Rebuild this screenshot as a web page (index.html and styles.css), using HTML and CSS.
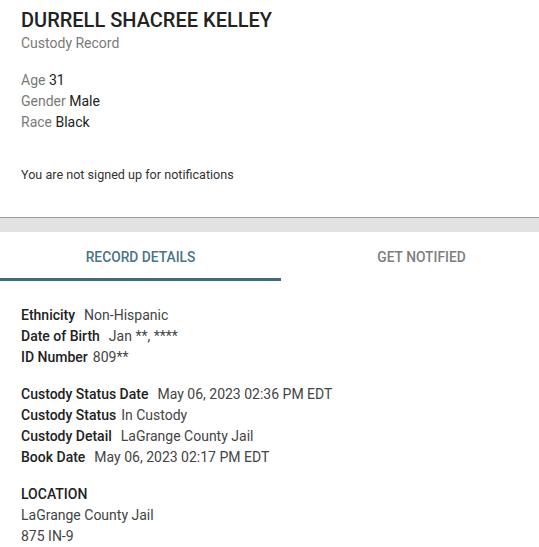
FILE: index.html
```html
<!DOCTYPE html>
<html lang="en">
<head>
  <meta charset="UTF-8">
  <title>Custody Record</title>
  <link rel="stylesheet" href="styles.css">
</head>
<body>
  <div class="header">
    <h1>DURRELL SHACREE KELLEY</h1>
    <p class="subtitle">Custody Record</p>

    <div class="facts">
      <div><span class="muted">Age</span> 31</div>
      <div><span class="muted">Gender</span> Male</div>
      <div><span class="muted">Race</span> Black</div>
    </div>

    <p class="notice">You are not signed up for notifications</p>
  </div>

  <div class="divider"></div>

  <div class="tabs">
    <div class="tab active">RECORD DETAILS</div>
    <div class="tab">GET NOTIFIED</div>
  </div>

  <div class="details">
    <div class="group">
      <div><span class="label">Ethnicity</span><span class="value">Non-Hispanic</span></div>
      <div><span class="label">Date of Birth</span><span class="value">Jan **, ****</span></div>
      <div><span class="label short">ID Number</span><span class="value">809**</span></div>
    </div>

    <div class="group">
      <div><span class="label">Custody Status Date</span><span class="value">May 06, 2023 02:36 PM EDT</span></div>
      <div><span class="label short">Custody Status</span><span class="value">In Custody</span></div>
      <div><span class="label">Custody Detail</span><span class="value">LaGrange County Jail</span></div>
      <div><span class="label">Book Date</span><span class="value">May 06, 2023 02:17 PM EDT</span></div>
    </div>

    <div class="group">
      <div class="label">LOCATION</div>
      <div class="value">LaGrange County Jail</div>
      <div class="value">875 IN-9</div>
    </div>
  </div>
</body>
</html>
```

FILE: styles.css
```css
body {
  margin: 0;
  font-family: Roboto, "Noto Sans", sans-serif;
  background-color: #ffffff;
  color: #222;
  overflow: hidden;
}
.header {
  padding: 8px 21px 0;
}
h1 {
  margin: 0;
  font-size: 20px;
  line-height: 24px;
  font-weight: 500;
  color: #222;
}
.subtitle {
  margin: 1px 0 0;
  font-size: 14px;
  line-height: 20.5px;
  color: #7a7a7a;
}
.facts {
  margin-top: 16px;
  font-size: 14px;
  line-height: 21px;
  color: #222;
}
.muted {
  color: #7a7a7a;
}
.notice {
  margin: 32px 0 0;
  font-size: 12.6px;
  line-height: 20px;
  color: #333;
}
.divider {
  margin-top: 32px;
  height: 14px;
  border-top: 1px solid #9c9c9c;
  background-color: #e2e2e2;
}
.tabs {
  display: flex;
  width: 562px;
}
.tab {
  flex: 0 0 281px;
  padding: 15px 0 11px;
  border-bottom: 3px solid transparent;
  text-align: center;
  font-size: 13.8px;
  line-height: 20px;
  font-weight: 500;
  color: #7d7d7d;
}
.tab.active {
  color: #4a7387;
  border-bottom-color: #3f6a7e;
}
.details {
  padding: 24px 21px 0;
  font-size: 14px;
  line-height: 21px;
}
.group {
  margin-bottom: 16px;
}
.label {
  font-weight: 500;
  color: #222;
  margin-right: 9px;
}
.label.short {
  margin-right: 5px;
}
.value {
  color: #444;
}
```
